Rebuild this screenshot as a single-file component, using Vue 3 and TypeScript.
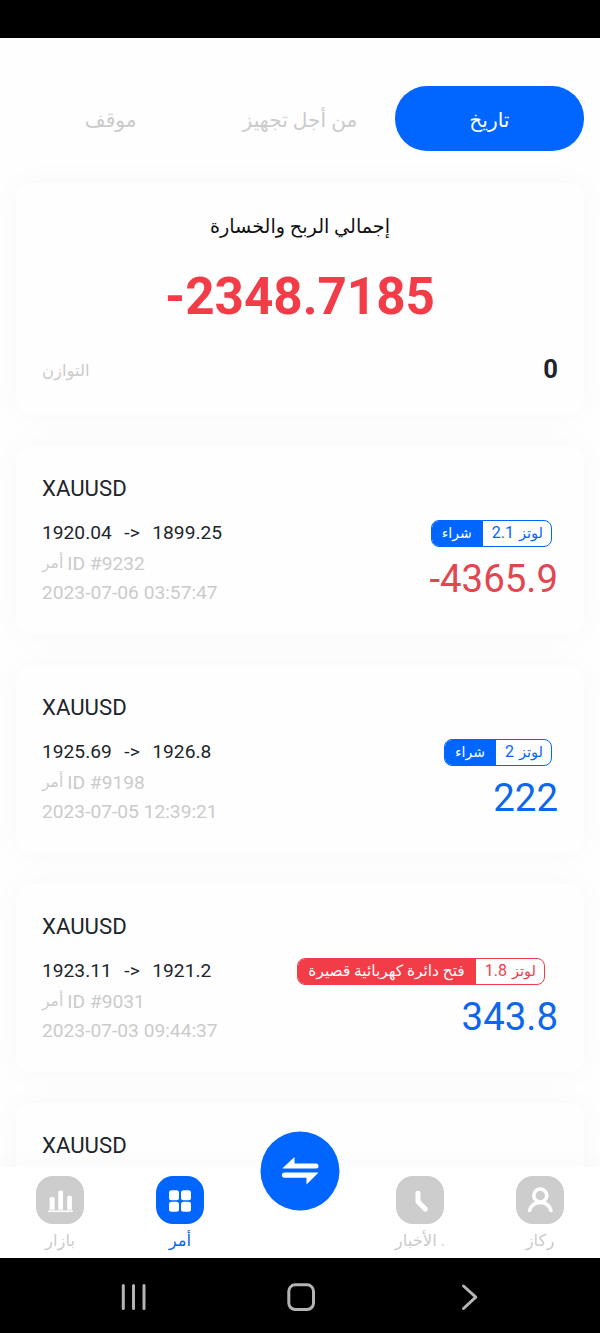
<script setup lang="ts">
interface Trade {
  symbol: string
  open: string
  close: string
  id: string
  time: string
  side: 'buy' | 'sell'
  sideLabel: string
  lots: string
  profit: string
}

const tabs: { label: string; active: boolean }[] = [
  { label: 'موقف', active: false },
  { label: 'من أجل تجهيز', active: false },
  { label: 'تاريخ', active: true },
]

const trades: Trade[] = [
  { symbol: 'XAUUSD', open: '1920.04', close: '1899.25', id: '9232', time: '2023-07-06 03:57:47', side: 'buy', sideLabel: 'شراء', lots: '2.1', profit: '-4365.9' },
  { symbol: 'XAUUSD', open: '1925.69', close: '1926.8', id: '9198', time: '2023-07-05 12:39:21', side: 'buy', sideLabel: 'شراء', lots: '2', profit: '222' },
  { symbol: 'XAUUSD', open: '1923.11', close: '1921.2', id: '9031', time: '2023-07-03 09:44:37', side: 'sell', sideLabel: 'فتح دائرة كهربائية قصيرة', lots: '1.8', profit: '343.8' },
  { symbol: 'XAUUSD', open: '', close: '', id: '', time: '', side: 'buy', sideLabel: '', lots: '', profit: '' },
]
</script>

<template>
  <div class="screen">
    <div class="status"></div>
    <main class="content">
      <nav class="tabs">
        <div v-for="t in tabs" :key="t.label" class="tab" :class="{ active: t.active }"><span dir="rtl">{{ t.label }}</span></div>
      </nav>

      <section class="card summary">
        <div class="summary-title" dir="rtl">إجمالي الربح والخسارة</div>
        <div class="summary-total">-2348.7185</div>
        <div class="summary-row">
          <span class="balance" dir="rtl">التوازن</span>
          <span class="balance-value">0</span>
        </div>
      </section>

      <section v-for="(t, i) in trades" :key="i" class="card trade">
        <div class="symbol">{{ t.symbol }}</div>
        <div v-if="t.id" class="details">
          <div class="left">
            <div class="prices"><span>{{ t.open }}</span><span>-&gt;</span><span>{{ t.close }}</span></div>
            <div class="order"><span class="order-word">أمر</span><span>ID #{{ t.id }}</span></div>
            <div class="time">{{ t.time }}</div>
          </div>
          <div class="right">
            <div class="badge" :class="t.side">
              <span class="side" dir="rtl">{{ t.sideLabel }}</span>
              <span class="lots"><span class="num">{{ t.lots }}</span><span class="unit">لوتز</span></span>
            </div>
            <div class="profit" :class="{ loss: t.profit.startsWith('-') }">{{ t.profit }}</div>
          </div>
        </div>
      </section>
    </main>

    <footer class="navbar">
      <div class="item">
        <svg class="icon" viewBox="0 0 48 48">
          <rect class="tile" width="48" height="48" rx="17" />
          <path class="w" d="M13.6 33.800V22.500q0-1.500 1.500-1.500h2q1.500 0 1.500 1.500V33.800zM22.300 33.800V16q0-1.500 1.500-1.500h1.700q1.500 0 1.500 1.500V33.800zM31.200 33.800V21.200q0-1.500 1.500-1.500h1.700q1.500 0 1.500 1.500V33.800z" />
          <rect class="w" x="12" y="34.400" width="25" height="1.500" rx=".7" />
        </svg>
        <span dir="rtl">بازار</span>
      </div>
      <div class="item active">
        <svg class="icon" viewBox="0 0 48 48">
          <rect class="tile" width="48" height="48" rx="17" />
          <rect class="w" x="13" y="14.200" width="10" height="10" rx="2.500" />
          <rect class="w" x="25" y="14.200" width="10" height="10" rx="2.500" />
          <rect class="w" x="13" y="25.800" width="10" height="10" rx="2.500" />
          <rect class="w" x="25" y="25.800" width="10" height="10" rx="2.500" />
        </svg>
        <span dir="rtl">أمر</span>
      </div>
      <div class="item"></div>
      <div class="item">
        <svg class="icon" viewBox="0 0 48 48">
          <rect class="tile" width="48" height="48" rx="17" />
          <path class="l thick" d="M22 17.300V25.800L29.300 33" />
        </svg>
        <span dir="ltr">الأخبار .</span>
      </div>
      <div class="item">
        <svg class="icon" viewBox="0 0 48 48">
          <rect class="tile" width="48" height="48" rx="17" />
          <circle class="l" cx="24.300" cy="19.500" r="6.500" />
          <path class="l" d="M13.500 34.500C15 29.500 19 26.500 24.300 26.500S33.500 29.500 35 34.500" />
        </svg>
        <span dir="rtl">ركاز</span>
      </div>
      <svg class="fab" viewBox="0 0 80 80">
        <circle class="fab-bg" cx="40" cy="40" r="39.500" />
        <path class="w" d="M22.500 37.300L34.500 26V32.500H56a2.500 2.500 0 0 1 0 5H22.500zM58.500 41.500L46.500 53.500V46.700H24.500a2.600 2.600 0 0 1 0-5.200H58z" />
      </svg>
    </footer>

    <div class="sysbar">
      <svg viewBox="0 0 600 75" width="600" height="75">
        <path d="M123.300 27.500v23M133.500 27.500v23M144 27.500v23" />
        <rect x="288.800" y="26.800" width="24.700" height="24.700" rx="6.500" />
        <path d="M463.500 28L475.800 39.200L463.500 50.500" />
      </svg>
    </div>
  </div>
</template>

<style>
body {
  margin: 0;
}
</style>

<style scoped>
.screen {
  width: 600px;
  height: 1333px;
  display: flex;
  flex-direction: column;
  background: #fefefe;
  color: #20252b;
  font-family: Roboto, "DejaVu Sans", sans-serif;
  overflow: hidden;
}
.status {
  flex: none;
  height: 37.600px;
  background: #000;
}
.content {
  flex: 1;
  min-height: 0;
  overflow: hidden;
  padding: 48px 16px 0;
  display: flex;
  flex-direction: column;
}
.tabs {
  flex: none;
  display: grid;
  grid-template-columns: repeat(3, 1fr);
  height: 65px;
}
.tab {
  box-sizing: border-box;
  display: flex;
  align-items: center;
  justify-content: center;
  border-radius: 32px;
  padding-top: 3px;
  color: #cbcbcb;
  font-size: 20.200px;
  line-height: 30px;
}
.tab.active {
  background: #0066ff;
  color: #fff;
}
.card {
  flex: none;
  box-sizing: border-box;
  background: #fefefe;
  border-radius: 16px;
  box-shadow: 0 0 32px rgba(0, 0, 0, 0.032);
  padding: 0 26px;
}
.summary {
  margin-top: 32px;
  height: 232px;
}
.summary-title {
  padding-top: 28px;
  height: 32px;
  line-height: 32px;
  text-align: center;
  font-size: 19.200px;
  color: #111;
}
.summary-total {
  margin-top: 24px;
  height: 60px;
  line-height: 60px;
  text-align: center;
  font-size: 51.200px;
  font-weight: 700;
  color: #f23c48;
}
.summary-row {
  margin-top: 27px;
  height: 30px;
  line-height: 30px;
  display: flex;
  justify-content: space-between;
}
.balance {
  padding-top: 2px;
  font-size: 16.400px;
  color: #cbcbcb;
}
.balance-value {
  font-size: 25.600px;
  font-weight: 700;
}
.trade {
  margin-top: 31px;
  height: 188px;
}
.symbol {
  padding-top: 28px;
  height: 28px;
  line-height: 28px;
  font-size: 22.200px;
}
.details {
  display: flex;
  justify-content: space-between;
  padding-top: 17px;
}
.left {
  font-size: 19.200px;
  color: #cbcbcb;
}
.prices {
  display: flex;
  gap: 12.600px;
  height: 28px;
  line-height: 28px;
  color: #20252b;
}
.order {
  display: flex;
  gap: 4px;
  margin-top: 2.500px;
  height: 29px;
  line-height: 29px;
}
.order-word {
  font-size: 15.600px;
}
.time {
  height: 29px;
  line-height: 29px;
}
.right {
  display: flex;
  flex-direction: column;
  align-items: flex-end;
}
.badge {
  --tone: #0066ff;
  box-sizing: border-box;
  display: flex;
  height: 27px;
  margin: 1px 6px 0 0;
  border: 1.600px solid var(--tone);
  border-radius: 8px;
  overflow: hidden;
  font-size: 16px;
  line-height: 24px;
}
.badge.sell {
  --tone: #f23c48;
  margin-right: 13px;
}
.side {
  background: var(--tone);
  color: #fff;
  padding: 0 11px 0 10px;
  font-size: 14px;
}
.sell .side {
  font-size: 15.400px;
}
.lots {
  display: flex;
  gap: 5px;
  padding: 0 8px 0 9px;
  color: var(--tone);
}
.unit {
  font-size: 14.600px;
}
.profit {
  margin-top: 9px;
  height: 46px;
  line-height: 46px;
  font-size: 38.400px;
  color: #0e66ea;
}
.profit.loss {
  color: #e24650;
}
.navbar {
  flex: none;
  position: relative;
  height: 91px;
  display: grid;
  grid-template-columns: repeat(5, 1fr);
  background: #fff;
  box-shadow: 0 -4px 26px rgba(0, 0, 0, 0.02);
}
.item {
  display: flex;
  flex-direction: column;
  align-items: center;
  padding-top: 9px;
  font-size: 16.400px;
  line-height: 34px;
  color: #cbcbcb;
}
.item.active {
  color: #0e66ea;
}
.icon {
  width: 48px;
  height: 48px;
  flex: none;
}
.tile {
  fill: #cdcdcd;
}
.active .tile {
  fill: #0066ff;
}
.w {
  fill: #fff;
}
.l {
  fill: none;
  stroke: #fff;
  stroke-width: 3.600;
  stroke-linecap: round;
  stroke-linejoin: round;
}
.thick {
  stroke-width: 5;
}
.fab {
  position: absolute;
  left: 260px;
  top: -36.500px;
  width: 80px;
  height: 80px;
}
.fab-bg {
  fill: #0066ff;
}
.sysbar {
  flex: none;
  height: 75px;
  background: #000;
}
.sysbar svg {
  display: block;
  fill: none;
  stroke: #b4b4b4;
  stroke-width: 3;
  stroke-linecap: round;
  stroke-linejoin: round;
}
</style>
